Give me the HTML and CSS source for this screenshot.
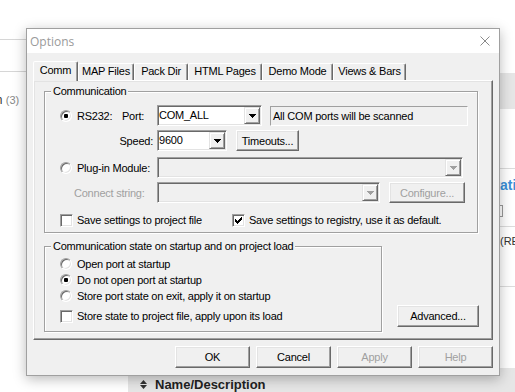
FILE: index.html
```html
<!DOCTYPE html>
<html lang="en">
<head>
<meta charset="utf-8">
<title>Options</title>
<link rel="stylesheet" href="styles.css">
</head>
<body>
<div class="app">
  <aside class="nav">
    <div class="nav-top"></div>
    <div class="nav-tabs"></div>
    <div class="nav-item"><span class="nav-label">Communication</span> <span class="nav-count">(3)</span></div>
  </aside>
  <main class="main">
    <div class="toolbar"></div>
    <div class="header-band"></div>
    <section class="detail">
      <h2 class="detail-title">Station</h2>
      <div class="detail-field"><span class="field-box"></span></div>
      <div class="detail-row">(READ)</div>
    </section>
    <div class="column-header">
      <svg class="sort-icon" width="7" height="9" viewBox="0 0 7 9"><path d="M0 4 3.5 0 7 4zM0 5h7L3.5 9z"/></svg>
      <span>Name/Description</span>
    </div>
  </main>
</div>

<div class="dialog" role="dialog" aria-label="Options">
  <div class="titlebar">
    <span class="title">Options</span>
    <svg class="close" width="10" height="10" viewBox="0 0 10 10"><path d="M0.5 0.5 9.5 9.5M9.5 0.5 0.5 9.5"/></svg>
  </div>
  <div class="dialog-body">
    <div class="tabs">
      <div class="tab tab-comm active">Comm</div>
      <div class="tab tab-map">MAP Files</div>
      <div class="tab tab-pack">Pack Dir</div>
      <div class="tab tab-html">HTML Pages</div>
      <div class="tab tab-demo">Demo Mode</div>
      <div class="tab tab-views">Views &amp; Bars</div>
    </div>
    <div class="panel">
      <fieldset class="group group-comm">
        <legend>Communication</legend>
        <div class="form-row">
          <div class="field-label">
            <span class="radio checked"></span><span class="rs-label">RS232:</span><span>Port:</span>
          </div>
          <div class="combo combo-port">
            <span class="combo-text">COM_ALL</span>
            <span class="combo-btn"><svg width="7" height="4" viewBox="0 0 7 4"><path d="M0 0h7v1H0zM1 1h5v1H1zM2 2h3v1H2zM3 3h1v1H3z"/></svg></span>
          </div>
          <div class="static-box">All COM ports will be scanned</div>
        </div>
        <div class="form-row row-speed">
          <div class="field-label label-right">Speed:</div>
          <div class="combo combo-speed">
            <span class="combo-text">9600</span>
            <span class="combo-btn"><svg width="7" height="4" viewBox="0 0 7 4"><path d="M0 0h7v1H0zM1 1h5v1H1zM2 2h3v1H2zM3 3h1v1H3z"/></svg></span>
          </div>
          <button class="btn btn-timeouts" type="button">Timeouts...</button>
        </div>
        <div class="form-row row-plugin">
          <div class="field-label">
            <span class="radio"></span><span>Plug-in Module:</span>
          </div>
          <div class="combo combo-plugin disabled">
            <span class="combo-text"></span>
            <span class="combo-btn"><svg width="7" height="4" viewBox="0 0 7 4"><path d="M0 0h7v1H0zM1 1h5v1H1zM2 2h3v1H2zM3 3h1v1H3z"/></svg></span>
          </div>
        </div>
        <div class="form-row row-connect">
          <div class="field-label label-indent is-disabled">Connect string:</div>
          <div class="combo combo-connect disabled">
            <span class="combo-text"></span>
            <span class="combo-btn"><svg width="7" height="4" viewBox="0 0 7 4"><path d="M0 0h7v1H0zM1 1h5v1H1zM2 2h3v1H2zM3 3h1v1H3z"/></svg></span>
          </div>
          <button class="btn btn-configure" type="button" disabled>Configure...</button>
        </div>
        <div class="form-row row-checks">
          <label class="check-item check-first"><span class="checkbox"></span>Save settings to project file</label>
          <label class="check-item"><span class="checkbox"><svg width="7" height="7" viewBox="0 0 7 7"><path d="M6 0h1v1H6zM5 1h2v1H5zM0 2h1v1H0zM4 2h3v1H4zM0 3h2v1H0zM3 3h3v1H3zM0 4h5v1H0zM1 5h3v1H1zM2 6h1v1H2z"/></svg></span>Save settings to registry, use it as default.</label>
        </div>
      </fieldset>
      <div class="state-row">
        <fieldset class="group group-state">
          <legend>Communication state on startup and on project load</legend>
          <div class="option"><span class="radio"></span>Open port at startup</div>
          <div class="option"><span class="radio checked"></span>Do not open port at startup</div>
          <div class="option"><span class="radio"></span>Store port state on exit, apply it on startup</div>
          <div class="option option-check"><span class="checkbox"></span>Store state to project file, apply upon its load</div>
        </fieldset>
        <button class="btn btn-advanced" type="button">Advanced...</button>
      </div>
    </div>
    <div class="dialog-buttons">
      <button class="btn btn-dialog" type="button">OK</button>
      <button class="btn btn-dialog" type="button">Cancel</button>
      <button class="btn btn-dialog" type="button" disabled>Apply</button>
      <button class="btn btn-dialog" type="button" disabled>Help</button>
    </div>
  </div>
</div>
</body>
</html>
```

FILE: styles.css
```css
* { box-sizing: border-box; }

html, body { margin: 0; }

body {
  position: relative;
  width: 515px;
  height: 392px;
  overflow: hidden;
  background: #fff;
  font-family: "Liberation Sans", Arial, sans-serif;
}

/* ---------- background application ---------- */
.app {
  display: grid;
  grid-template-columns: 128px 1fr;
  height: 392px;
}

.nav { overflow: hidden; }

.nav-top {
  height: 40px;
  border-bottom: 1px solid #d6d6d6;
}

.nav-tabs {
  height: 32px;
  border-bottom: 1px solid #d6d6d6;
}

.nav-item {
  margin: 20px 0 0 -81px;
  font-size: 12px;
  line-height: 16px;
  white-space: nowrap;
  color: #333;
}

.nav-count { color: #888; font-size: 11px; }

.main {
  display: flex;
  flex-direction: column;
  overflow: hidden;
}

.toolbar { height: 73px; flex: none; }

.header-band { height: 36px; flex: none; background: #e6e6e6; }

.detail {
  margin-top: 59px;
  border-top: 1px solid #dcdcdc;
}

.detail-title {
  margin: 0;
  padding: 8px 0 0 358px;
  font: bold 14px/17px "Liberation Sans", Arial, sans-serif;
  color: #3a8fd8;
  white-space: nowrap;
}

.detail-field {
  padding: 11px 0 9px 315px;
  border-bottom: 1px solid #dcdcdc;
}

.field-box {
  display: block;
  width: 60px;
  height: 12px;
  border: 1px solid #9a9a9a;
}

.detail-row {
  padding: 8px 0 38px 372px;
  border-bottom: 1px solid #dcdcdc;
  font-size: 11px;
  line-height: 13px;
  color: #333;
  white-space: nowrap;
}

.column-header {
  margin-top: auto;
  flex: none;
  height: 24px;
  padding: 8px 0 0 12px;
  display: flex;
  align-items: center;
  gap: 8px;
  background: #e6e6e6;
  font: bold 13px "Liberation Sans", Arial, sans-serif;
  color: #222;
}

.sort-icon { fill: #333; flex: none; }

/* ---------- dialog window ---------- */
.dialog {
  position: absolute;
  left: 26px;
  top: 28px;
  width: 474px;
  height: 348px;
  display: flex;
  flex-direction: column;
  background: #f0f0f0;
  border: 1px solid #a0a0a0;
  box-shadow: 0 3px 12px rgba(0, 0, 0, 0.28);
  font-size: 11px;
  letter-spacing: -0.23px;
  color: #000;
}

.titlebar {
  flex: none;
  height: 24px;
  display: flex;
  align-items: center;
  justify-content: space-between;
  padding: 0 9px 0 3px;
  background: #fff;
}

.title {
  font: 12px "Open Sans", sans-serif;
  letter-spacing: 0;
  color: #9a9a9a;
}

.close { display: block; stroke: #8a8a8a; stroke-width: 1; fill: none; }

.dialog-body {
  flex: 1;
  display: flex;
  flex-direction: column;
  padding: 8px 6px 7px 6px;
}

/* tabs */
.tabs {
  display: flex;
  align-items: flex-end;
  height: 19px;
  position: relative;
  z-index: 1;
}

.tab {
  flex: none;
  height: 17px;
  padding: 0;
  border: 1px solid;
  border-bottom: none;
  border-color: #fff #696969 transparent #fff;
  border-radius: 2px 2px 0 0;
  box-shadow: inset -1px 0 0 #a0a0a0;
  line-height: 15px;
  text-align: center;
  white-space: nowrap;
}

.tab.active {
  height: 20px;
  margin-bottom: -1px;
  background: #f0f0f0;
  line-height: 16px;
}

.tab-comm { width: 45px; }
.tab-map { width: 56px; }
.tab-pack { width: 54px; }
.tab-html { width: 74px; }
.tab-demo { width: 71px; }
.tab-views { width: 73px; }

.panel {
  width: 460px;
  border: 1px solid;
  border-color: #fff #696969 #696969 #fff;
  box-shadow: inset -1px -1px 0 #a0a0a0, inset 1px 1px 0 #e3e3e3;
  padding: 4px 10px 7px 10px;
}

/* group boxes */
.group {
  margin: 0;
  min-width: 0;
  border: 1px solid #a0a0a0;
  box-shadow: 1px 1px 0 #fff, inset 1px 1px 0 #fff;
}

.group legend {
  margin-left: -9px;
  padding: 0 2px;
  line-height: 13px;
  background: #f0f0f0;
}

.group-comm {
  width: 434px;
  padding: 7px 0 3px 15px;
}

.form-row {
  display: flex;
  align-items: center;
  height: 21px;
}

.row-speed { margin-top: 4px; }
.row-plugin { margin-top: 6px; }
.row-connect { margin-top: 4px; }
.row-checks { margin-top: 8px; height: 18px; }

.field-label {
  flex: none;
  width: 97px;
  display: flex;
  align-items: center;
  white-space: nowrap;
}

.label-right { justify-content: flex-end; padding-right: 4px; }
.label-indent { padding-left: 14px; }
.is-disabled { color: #a0a0a0; }

.rs-label { width: 45px; }

/* radio and checkbox */
.radio {
  position: relative;
  flex: none;
  width: 12px;
  height: 12px;
  margin-right: 5px;
  border-radius: 50%;
  border: 1px solid;
  border-color: #a0a0a0 #fff #fff #a0a0a0;
  box-shadow: inset 1px 1px 0 #696969, inset -1px -1px 0 #e3e3e3;
  background: #fff;
}

.radio.checked::after {
  content: "";
  position: absolute;
  left: 3px;
  top: 3px;
  width: 4px;
  height: 4px;
  border-radius: 1px;
  background: #000;
}

.checkbox {
  flex: none;
  width: 13px;
  height: 13px;
  margin-right: 4px;
  display: flex;
  align-items: center;
  justify-content: center;
  border: 1px solid;
  border-color: #a0a0a0 #fff #fff #a0a0a0;
  box-shadow: inset 1px 1px 0 #696969, inset -1px -1px 0 #e3e3e3;
  background: #fff;
}

.checkbox svg { display: block; fill: #000; }

.check-item {
  display: flex;
  align-items: center;
  white-space: nowrap;
}

.check-first { width: 172px; }

/* combo boxes */
.combo {
  flex: none;
  display: flex;
  height: 21px;
  padding: 1px;
  border: 1px solid;
  border-color: #a0a0a0 #fff #fff #a0a0a0;
  box-shadow: inset 1px 1px 0 #696969, inset -1px -1px 0 #e3e3e3;
  background: #fff;
}

.combo-text { flex: 1; line-height: 17px; white-space: nowrap; }

.combo-btn {
  flex: none;
  width: 16px;
  display: flex;
  align-items: center;
  justify-content: center;
  background: #f0f0f0;
  border: 1px solid;
  border-color: #e3e3e3 #696969 #696969 #e3e3e3;
  box-shadow: inset 1px 1px 0 #fff, inset -1px -1px 0 #a0a0a0;
  color: #000;
}

.combo-btn svg { display: block; fill: currentColor; }

.combo.disabled { background: #f0f0f0; }
.combo.disabled .combo-btn { color: #a0a0a0; }

.combo-port { width: 105px; }
.combo-speed { width: 70px; }
.combo-plugin { width: 306px; }
.combo-connect { width: 223px; }

.static-box {
  flex: none;
  width: 198px;
  height: 20px;
  margin: 1px 0 0 8px;
  padding-left: 2px;
  border: 1px solid;
  border-color: #a0a0a0 #fff #fff #a0a0a0;
  line-height: 18px;
  white-space: nowrap;
}

/* buttons */
.btn {
  flex: none;
  height: 21px;
  padding: 0;
  font: inherit;
  letter-spacing: inherit;
  color: #000;
  background: #f0f0f0;
  border: 1px solid;
  border-color: #fff #696969 #696969 #fff;
  border-radius: 0;
  box-shadow: inset -1px -1px 0 #a0a0a0, inset 1px 1px 0 #e3e3e3;
  white-space: nowrap;
}

.btn:disabled { color: #a0a0a0; }

.btn-timeouts { width: 63px; margin-left: 9px; }
.btn-configure { width: 76px; margin-left: 9px; }

.state-row {
  display: flex;
  align-items: flex-end;
  margin-top: 7px;
}

.group-state {
  width: 338px;
  padding: 3px 0 7px 15px;
}

.option {
  display: flex;
  align-items: center;
  height: 16px;
  white-space: nowrap;
}

.option-check { margin-top: 4px; }

.btn-advanced {
  width: 82px;
  height: 22px;
  margin: 0 0 5px 15px;
}

.dialog-buttons {
  display: flex;
  justify-content: flex-end;
  gap: 6px;
  margin-top: 6px;
}

.btn-dialog { width: 75px; height: 22px; }
```
